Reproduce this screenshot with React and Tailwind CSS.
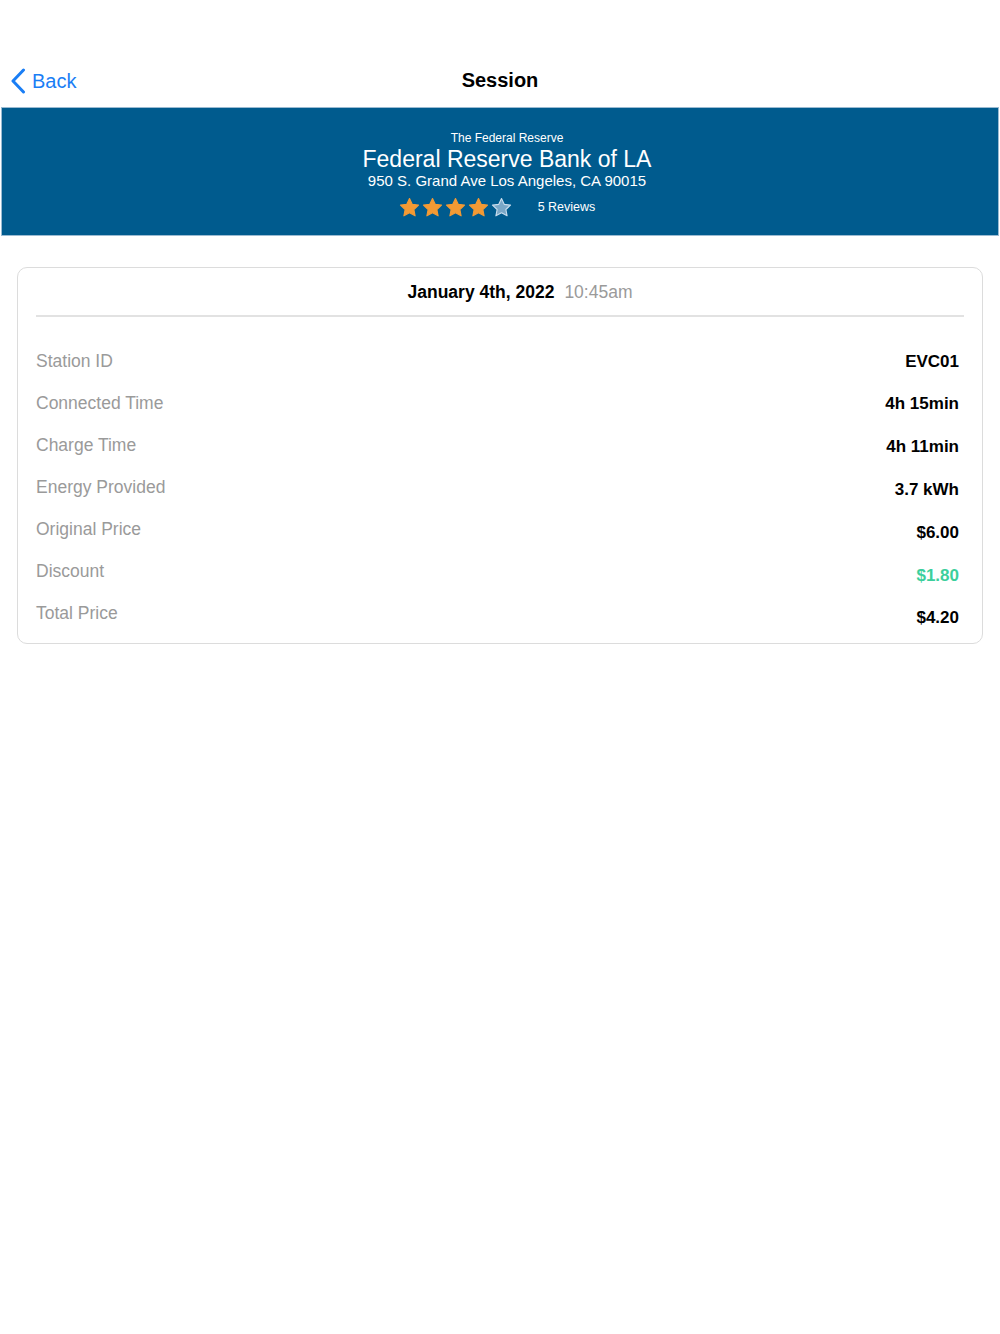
import React from 'react';

const Star = ({ filled }) => (
  <svg viewBox="0 0 24 24" className="w-[21px] h-[21px]">
    <path
      d="M12 1.8l3.1 6.6 7.2.9-5.3 5 1.4 7.2L12 18l-6.4 3.5 1.4-7.2-5.3-5 7.2-.9z"
      fill={filled ? '#f39a34' : '#7aa7c7'}
      stroke={filled ? '#f39a34' : '#c9dded'}
      strokeWidth="1.3"
      strokeLinejoin="round"
    />
  </svg>
);

const rows = [
  { label: 'Station ID', value: 'EVC01' },
  { label: 'Connected Time', value: '4h 15min' },
  { label: 'Charge Time', value: '4h 11min' },
  { label: 'Energy Provided', value: '3.7 kWh' },
  { label: 'Original Price', value: '$6.00' },
  { label: 'Discount', value: '$1.80', green: true },
  { label: 'Total Price', value: '$4.20' },
];

export default function App() {
  return (
    <div className="min-h-[1334px] bg-white font-['Liberation_Sans',Arial,sans-serif]">
      {/* Nav bar */}
      <div className="relative h-[107px] pt-[55px]">
        <div className="flex items-center h-[52px] pl-[10px]">
          <svg viewBox="0 0 16 26" className="w-[16px] h-[26px]">
            <path d="M13.5 2L3 13l10.5 11" fill="none" stroke="#1a7ef5" strokeWidth="3" strokeLinecap="round" strokeLinejoin="round" />
          </svg>
          <span className="ml-[6px] text-[20px] text-[#1a7ef5]">Back</span>
        </div>
        <div className="absolute left-0 right-0 top-[55px] h-[50px] flex items-center justify-center text-[20px] font-semibold text-black">
          Session
        </div>
      </div>

      {/* Location banner */}
      <div className="mx-[1px] h-[129px] bg-[#005b8e] border border-[#9bbbd2] flex flex-col items-center pt-[23px] text-white">
        <div className="pl-[14px] flex flex-col items-center">
          <div className="text-[12px] leading-[15px]">The Federal Reserve</div>
          <div className="text-[23px] leading-[26px] font-medium">Federal Reserve Bank of LA</div>
          <div className="text-[15px] leading-[17px]">950 S. Grand Ave Los Angeles, CA 90015</div>
        </div>
        <div className="flex items-center mt-[8px] pr-[6px]">
          <div className="flex gap-[2px]">
            <Star filled />
            <Star filled />
            <Star filled />
            <Star filled />
            <Star />
          </div>
          <span className="ml-[26px] text-[12.5px]">5 Reviews</span>
        </div>
      </div>

      {/* Session card */}
      <div className="mx-[17px] mt-[31px] border border-[#dcdcdc] rounded-[10px] px-[18px] pb-[3px]">
        <div className="h-[49px] flex items-center justify-center border-b-2 border-[#e2e2e2] pl-[40px] pt-[2px]">
          <span className="text-[17.5px] font-bold text-black">January 4th, 2022</span>
          <span className="ml-[10px] text-[17.5px] text-[#9a9a9a]">10:45am</span>
        </div>
        <div className="flex justify-between pt-[22px] pr-[5px]">
          <div className="flex flex-col pt-[1px]">
            {rows.map((r) => (
              <div key={r.label} className="h-[42px] flex items-center text-[17.5px] text-[#9a9a9a]">
                {r.label}
              </div>
            ))}
          </div>
          <div className="flex flex-col items-end pt-[1px]">
            {rows.map((r) => (
              <div
                key={r.label}
                className={`h-[42.8px] flex items-center text-[17px] font-bold ${r.green ? 'text-[#3ccf9c]' : 'text-black'}`}
              >
                {r.value}
              </div>
            ))}
          </div>
        </div>
      </div>
    </div>
  );
}
